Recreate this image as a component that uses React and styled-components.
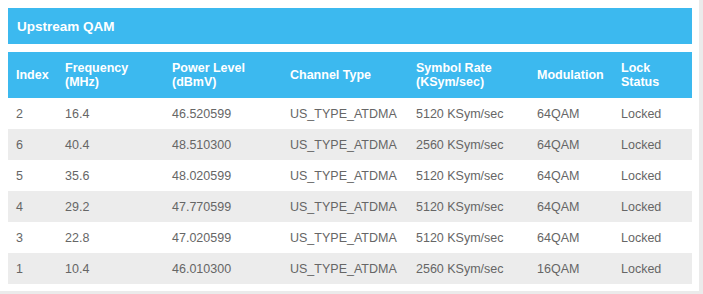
import React from "react";
import styled, { createGlobalStyle } from "styled-components";

const Global = createGlobalStyle`
  html, body { margin: 0; padding: 0; background: #ebebeb; }
  body { font-family: "Liberation Sans", Arial, sans-serif; }
`;

const Card = styled.div`
  width: 699px;
  box-sizing: border-box;
  background: #fff;
  padding: 8px 7px 7px 8px;
`;

const TitleBar = styled.div`
  height: 36px;
  display: flex;
  align-items: center;
  padding-left: 9px;
  background: #3cb9ef;
  color: #fff;
  font-weight: bold;
  font-size: 13.5px;
  margin-bottom: 8px;
`;

const Table = styled.table`
  width: 684px;
  border-collapse: collapse;
  table-layout: fixed;
`;

const Th = styled.th`
  background: #3cb9ef;
  color: #fff;
  font-weight: bold;
  font-size: 12.5px;
  text-align: left;
  line-height: 14px;
  height: 46px;
  padding: 0 0 0 8px;
  vertical-align: middle;
  box-sizing: border-box;
`;

const Row = styled.tr`
  background: ${(p) => (p.$shade ? "#ececec" : "#fff")};
`;

const Td = styled.td`
  height: 31px;
  padding: 0 0 0 8px;
  font-size: 12.5px;
  color: #666;
  vertical-align: middle;
  white-space: nowrap;
`;

const cols = [
  { w: 49, label: ["Index"] },
  { w: 107, label: ["Frequency", "(MHz)"] },
  { w: 118, label: ["Power Level", "(dBmV)"] },
  { w: 126, label: ["Channel Type"] },
  { w: 121, label: ["Symbol Rate", "(KSym/sec)"] },
  { w: 84, label: ["Modulation"] },
  { w: 79, label: ["Lock", "Status"] },
];

const rows = [
  ["2", "16.4", "46.520599", "US_TYPE_ATDMA", "5120 KSym/sec", "64QAM", "Locked"],
  ["6", "40.4", "48.510300", "US_TYPE_ATDMA", "2560 KSym/sec", "64QAM", "Locked"],
  ["5", "35.6", "48.020599", "US_TYPE_ATDMA", "5120 KSym/sec", "64QAM", "Locked"],
  ["4", "29.2", "47.770599", "US_TYPE_ATDMA", "5120 KSym/sec", "64QAM", "Locked"],
  ["3", "22.8", "47.020599", "US_TYPE_ATDMA", "5120 KSym/sec", "64QAM", "Locked"],
  ["1", "10.4", "46.010300", "US_TYPE_ATDMA", "2560 KSym/sec", "16QAM", "Locked"],
];

export default function App() {
  return (
    <>
      <Global />
      <Card>
        <TitleBar>Upstream QAM</TitleBar>
        <Table>
          <colgroup>
            {cols.map((c, i) => (
              <col key={i} style={{ width: c.w }} />
            ))}
          </colgroup>
          <thead>
            <tr>
              {cols.map((c, i) => (
                <Th key={i}>
                  {c.label.map((l, j) => (
                    <React.Fragment key={j}>
                      {j > 0 && <br />}
                      {l}
                    </React.Fragment>
                  ))}
                </Th>
              ))}
            </tr>
          </thead>
          <tbody>
            {rows.map((r, i) => (
              <Row key={i} $shade={i % 2 === 1}>
                {r.map((v, j) => (
                  <Td key={j}>{v}</Td>
                ))}
              </Row>
            ))}
          </tbody>
        </Table>
      </Card>
    </>
  );
}
